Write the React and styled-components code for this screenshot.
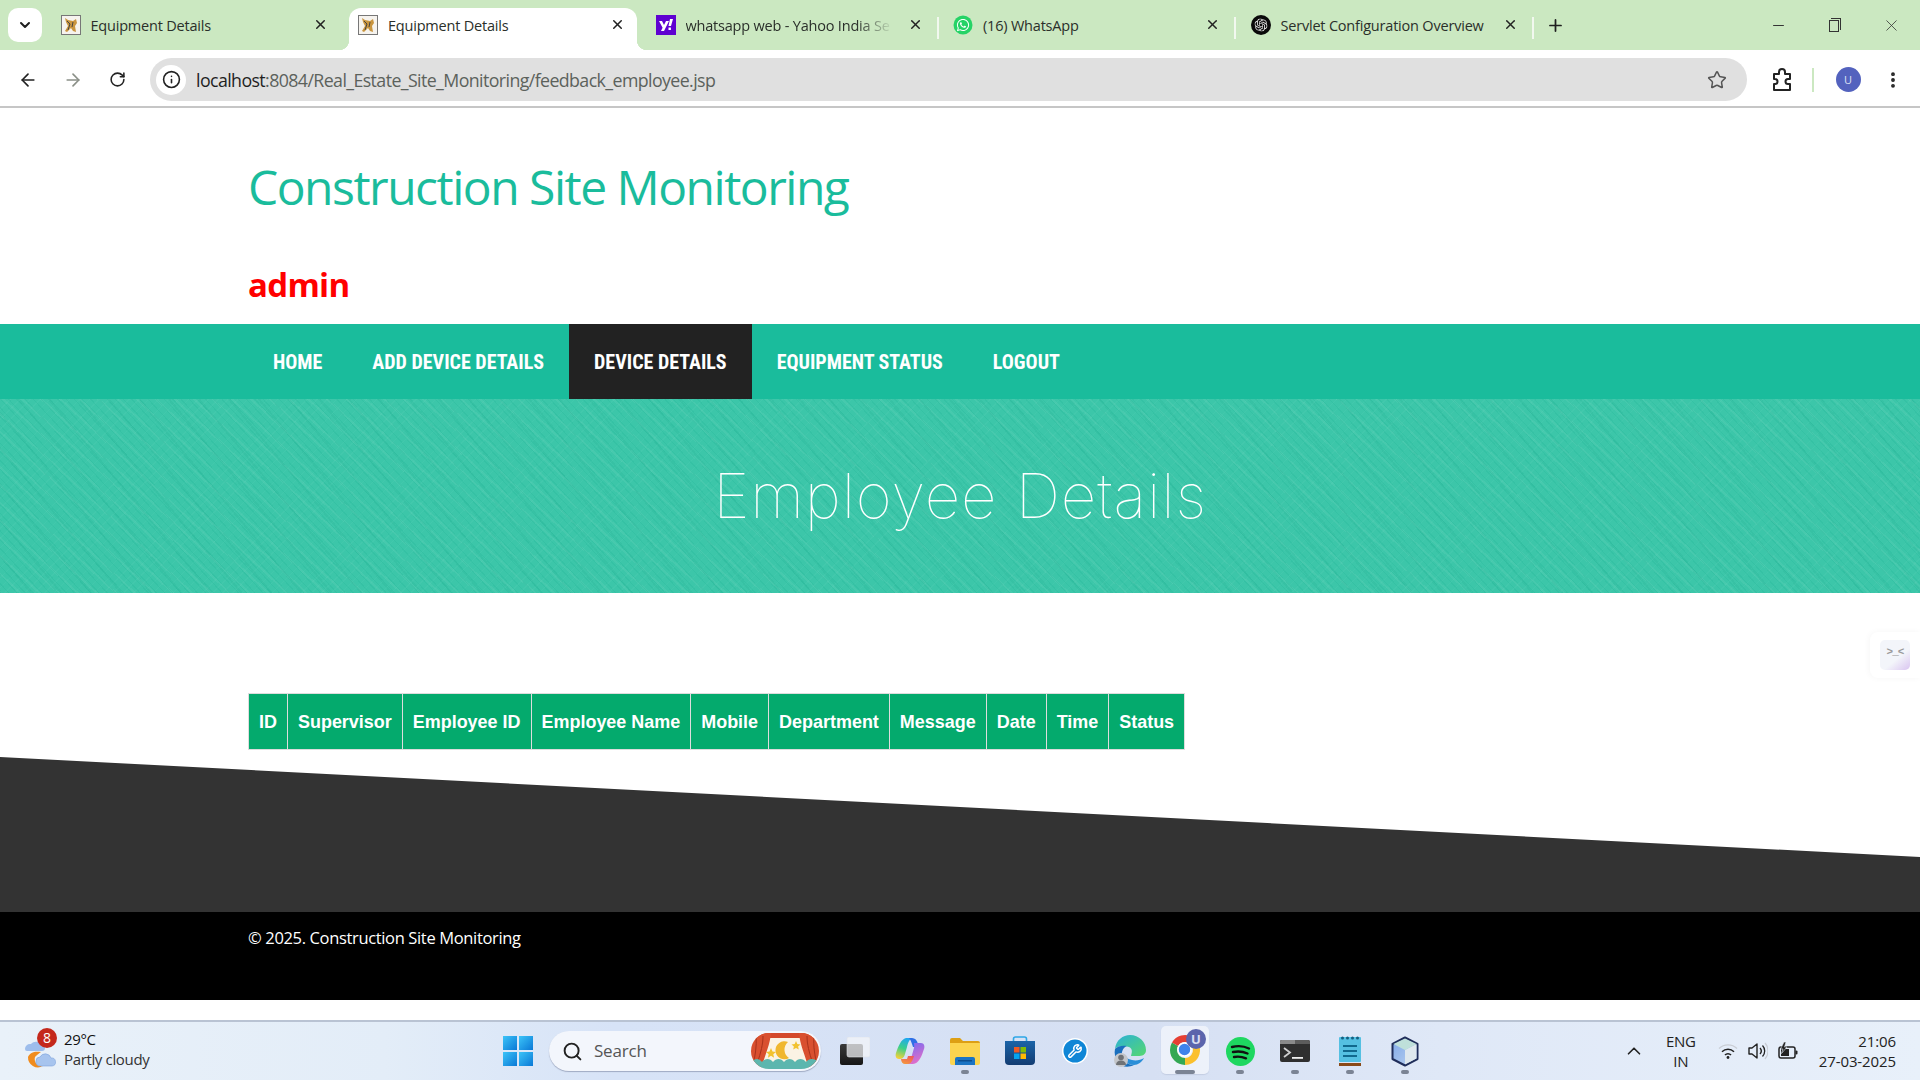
import React from 'react';
import styled, { createGlobalStyle } from 'styled-components';
import { FaWhatsapp } from 'react-icons/fa';
import { SiOpenai } from 'react-icons/si';
import { ArrowLeft, ArrowRight, RotateCw, Info, Star, MoreVertical, X, Plus, Minus, ChevronDown, ChevronUp, Search, Wrench } from 'lucide-react';

const Global = createGlobalStyle`
  html, body { margin: 0; padding: 0; background: #fff; }
  body { font-family: "Open Sans", "Liberation Sans", sans-serif; overflow: hidden; }
  * { box-sizing: border-box; }
`;
const Screen = styled.div`width: 1920px; height: 1080px; display: flex; flex-direction: column; overflow: hidden; background: #fff;`;

const TabStrip = styled.div`height: 50px; background: #cbe8c1; display: flex; align-items: flex-end; flex: none;`;
const Switcher = styled.div`width: 34px; height: 34px; margin: 0 8px 8px 8px; border-radius: 10px; background: #fff; display: flex; align-items: center; justify-content: center; color: #1f1f1f;`;
const Tab = styled.div`
  position: relative; width: 297.5px; height: 42px; flex: none; display: flex; align-items: center; padding: 0 0 8px 10.5px; color: #2a2f2a;
  &::before { content: ''; position: absolute; z-index: 0; left: 1.5px; top: 0; bottom: 0; width: 288px; border-radius: 12px 12px 0 0; background: ${p => (p.$active ? '#fff' : 'transparent')}; }
  &::after { content: ''; position: absolute; right: 4px; top: 9px; height: 22px; width: 2px; background: ${p => (p.$sep ? '#f2f8ef' : 'transparent')}; }
`;
const Corner = styled.span`
  position: absolute; bottom: 0; width: 10px; height: 10px; left: ${p => (p.$right ? '289.5px' : '-8.5px')};
  background: radial-gradient(circle at ${p => (p.$right ? '100% 0' : '0 0')}, transparent 10px, #fff 10.5px);
`;
const FavSlot = styled.span`position: relative; z-index: 1; width: 20px; height: 20px; flex: none; display: flex; align-items: center; justify-content: center;`;
const TabTitle = styled.span`
  position: relative; z-index: 1; margin: 2px 0 0 10px; font: 400 14.5px/20px "Open Sans", sans-serif; letter-spacing: -0.2px; white-space: nowrap;
  ${p => p.$fade && '-webkit-mask-image: linear-gradient(to right, #000 170px, transparent 207px);'}
`;
const TabClose = styled.span`position: absolute; z-index: 1; left: 262px; top: 8px; width: 16px; height: 16px; color: #222; display: flex; align-items: center; justify-content: center;`;
const NewTab = styled.div`width: 24px; height: 34px; margin: 0 0 8px 6px; display: flex; align-items: center; justify-content: center; color: #1f1f1f;`;
const WindowControls = styled.div`margin-left: auto; height: 50px; display: flex; align-self: flex-start;`;
const WinBtn = styled.div`width: ${p => p.$w || 56}px; height: 50px; display: flex; align-items: center; justify-content: center; color: #333;`;
const RestoreIcon = styled.span`
  position: relative; width: 10px; height: 12px; border: 1px solid #333; background: #cbe8c1; margin-top: 2px;
  &::before { content: ''; position: absolute; left: 1px; top: -3px; width: 9px; height: 11px; border: 1px solid #333; border-left: 0; border-bottom: 0; }
`;

const Toolbar = styled.div`height: 58px; flex: none; background: #fff; border-radius: 10px 10px 0 0; border-bottom: 2px solid #c6c6c6; display: flex; align-items: center; padding: 3px 0 0 0; position: relative;`;
const NavBtn = styled.div`width: 44.5px; height: 44px; flex: none; display: flex; align-items: center; justify-content: center; color: ${p => p.$off ? '#8b9088' : '#222'};`;
const BackGroup = styled.div`display: flex; padding-left: 6px; width: 150px;`;
const Omnibox = styled.div`width: 1597px; height: 43px; flex: none; border-radius: 22px; background: #e0e0e0; display: flex; align-items: center; padding: 0 20px 0 6px;`;
const InfoChip = styled.div`width: 30px; height: 30px; border-radius: 50%; background: #fff; display: flex; align-items: center; justify-content: center; color: #222;`;
const Url = styled.div`margin-left: 10px; font: 400 17.8px/24px "Open Sans", sans-serif; letter-spacing: -0.6px; color: #5c625c; white-space: nowrap;`;
const UrlHost = styled.span`color: #1f1f1f;`;
const OmniStar = styled.div`margin-left: auto; color: #555; display: flex;`;
const ToolRight = styled.div`flex: 1; display: flex; align-items: center; padding-left: 24px;`;
const Divider = styled.div`width: 1.5px; height: 24px; background: #cbe8c1; margin: 0 22px 0 19px;`;
const Avatar = styled.div`width: 25px; height: 25px; border-radius: 50%; background: #5362be; color: #dfe3f5; font: 400 11px/25px "Open Sans", sans-serif; text-align: center;`;
const KebabSlot = styled.div`margin-left: 22px; display: flex; color: #222;`;

const Page = styled.div`flex: 1; display: flex; flex-direction: column; min-height: 0;`;
const Header = styled.header`height: 216px; flex: none; padding: 46px 0 0 248px; display: flex; flex-direction: column;`;
const SiteTitle = styled.h1`margin: 0; font: 400 48px/66px "Open Sans", sans-serif; letter-spacing: -1.5px; color: #1abc9c; white-space: nowrap;`;
const UserName = styled.h2`margin: 43px 0 0; font: 700 33px/44px "Open Sans", sans-serif; letter-spacing: -0.7px; color: #ff0000;`;
const NavBar = styled.nav`height: 75px; flex: none; background: #1abc9c; display: flex; padding-left: 248px;`;
const NavItem = styled.a`
  display: flex; align-items: center; padding: 0 25px; color: #fff; text-transform: uppercase;
  font: 700 20px/24px Roboto, sans-serif; font-stretch: 75%; background: ${p => (p.$active ? '#222' : 'transparent')}; white-space: nowrap;
`;
const Banner = styled.section`
  height: 194px; flex: none; display: flex; align-items: center; justify-content: center;
  background-color: #3cc6a9;
  background-image:
    repeating-linear-gradient(47deg, rgba(26,176,146,.2) 0 1px, transparent 1px 6px),
    repeating-linear-gradient(43deg, rgba(255,255,255,.05) 0 2px, transparent 2px 13px),
    repeating-linear-gradient(135deg, rgba(255,255,255,.03) 0 1px, transparent 1px 7px),
    repeating-linear-gradient(50deg, rgba(20,160,130,.12) 0 2px, transparent 2px 23px);
`;
const BannerTitle = styled.h2`margin: 0; font: 100 62px/74px Inter, sans-serif; letter-spacing: 0.85px; color: #fff; white-space: nowrap;`;
const Main = styled.main`height: 164px; flex: none; padding: 100px 0 0 248px;`;
const Table = styled.table`border-collapse: collapse; font-family: "Liberation Sans", Arial, sans-serif;`;
const Th = styled.th`background: #04aa6d; color: #fff; border: 1px solid #ddd; padding: 17.5px 10px; font-size: 17.97px; line-height: 20px; font-weight: 700; white-space: nowrap;`;
const Slant = styled.div`height: 155px; flex: none; background: #333; clip-path: polygon(0 0, 100% 100px, 100% 100%, 0 100%);`;
const Footer = styled.footer`height: 88px; flex: none; background: #000; color: #fff; padding: 13px 0 0 248px; font: 400 16.5px/26px "Open Sans", sans-serif; letter-spacing: -0.35px;`;
const Gap = styled.div`height: 20px; flex: none; background: #fff;`;

const Widget = styled.div`position: absolute; right: 0; top: 632px; width: 50px; height: 46px; background: #fff; border-radius: 8px 0 0 8px; box-shadow: -1px 0 6px rgba(0,0,0,.04); display: flex; align-items: center; justify-content: center;`;
const WidgetInner = styled.div`width: 30px; height: 30px; border-radius: 5px; background: linear-gradient(140deg, #f3f5fa 60%, #d9c4f0); color: #9a9a9a; font: 700 11px/24px "Liberation Mono", monospace; text-align: center; letter-spacing: -1px;`;

const Taskbar = styled.div`
  height: 60px; flex: none; border-top: 2px solid #b9c3d3; display: grid; grid-template-columns: 501px auto 1fr; align-items: center;
  background: linear-gradient(90deg, #e9f1f9 0%, #e3edf8 20%, #d7e3f7 32%, #d6e0f3 60%, #dfe8f7 75%, #e8f0fa 100%);
`;
const Weather = styled.div`display: flex; align-items: center; padding-left: 24px; height: 100%;`;
const WeatherIcon = styled.div`position: relative; width: 34px; height: 36px; flex: none;`;
const Badge = styled.span`position: absolute; left: 13px; top: -5px; width: 20px; height: 20px; border-radius: 50%; background: #c4281c; color: #fff; font: 400 14px/20px "Open Sans", sans-serif; text-align: center;`;
const WeatherText = styled.div`margin: -4px 0 0 6px; font: 400 15px/20px "Open Sans", sans-serif; letter-spacing: -0.35px; color: #333;`;
const WeatherTemp = styled.div`color: #111;`;
const Center = styled.div`display: flex; align-items: center; height: 100%;`;
const WinLogo = styled.div`width: 30px; height: 30px; display: grid; grid-template-columns: 1fr 1fr; gap: 1.5px; margin: 0 16px 0 2px;`;
const WinPane = styled.span`background: linear-gradient(135deg, #3cc4f8, #0a78d6);`;
const SearchBox = styled.div`width: 272px; height: 40px; margin-right: 6.5px; border-radius: 20px; background: #f3f6fc; box-shadow: 0 1px 1px rgba(90,100,130,.45); display: flex; align-items: center; padding: 0 2px 0 13px; color: #222;`;
const SearchText = styled.span`margin-left: 11px; font: 400 17px/22px "Open Sans", sans-serif; letter-spacing: -0.2px; color: #555;`;
const SearchArt = styled.div`margin-left: auto; display: flex;`;
const Slot = styled.div`
  position: relative; width: 55px; height: 58px; flex: none; display: flex; align-items: center; justify-content: center;
  ${p => p.$active && `&::before { content: ''; position: absolute; left: 3.5px; top: 4px; width: 48px; height: 48px; border-radius: 5px; background: rgba(255,255,255,.55); box-shadow: 0 1px 1px rgba(120,130,160,.2); }`}
  & > svg { position: relative; }
`;
const Dot = styled.span`position: absolute; left: 50%; bottom: 6px; height: 4px; border-radius: 2px; transform: translateX(-50%); background: #7b8494; width: ${p => (p.$wide ? '20px' : '8px')};`;
const Tray = styled.div`display: flex; align-items: center; justify-content: flex-end; padding-right: 24px; color: #222; height: 100%;`;
const TrayChevron = styled.div`display: flex; margin-right: 11px;`;
const Lang = styled.div`width: 50px; text-align: center; font: 400 15px/20px "Open Sans", sans-serif; letter-spacing: -0.3px; margin-right: 12px;`;
const TrayIcons = styled.div`display: flex; align-items: center; gap: 10px; margin-right: 21px;`;
const Clock = styled.div`text-align: right; font: 400 15px/20px "Open Sans", sans-serif; letter-spacing: -0.1px;`;

const TomcatIcon = () => (
  <svg width="20" height="20" viewBox="0 0 20 20"><rect x=".5" y=".5" width="19" height="19" fill="#f6f3ee" stroke="#777" /><path d="M4 3l3 2 5 1 3-2 1 4-2 3 1 6-3-1-2-3-4 4-2-1 3-5-2-4z" fill="#c9953f" /><path d="M6 6l3 3-2 6M12 7l-1 5" stroke="#444" strokeWidth="1" fill="none" /></svg>
);
const YahooIcon = () => (
  <svg width="20" height="20" viewBox="0 0 20 20"><rect width="20" height="20" fill="#5f01d1" /><path d="M3 6h3l2 4 2-4h3l-5 10H5l1.6-3.2zM14 4h3l-2 7h-2.5zM12.5 12.5h2.4v2.4h-2.4z" fill="#fff" /></svg>
);
const WhatsAppIcon = () => (
  <svg width="20" height="20" viewBox="0 0 20 20"><circle cx="10" cy="10" r="9.5" fill="#25d366" /><FaWhatsapp x="3" y="3" size="14" color="#fff" /></svg>
);
const OpenAiIcon = () => (
  <svg width="20" height="20" viewBox="0 0 20 20"><circle cx="10" cy="10" r="10" fill="#0a0a0a" /><SiOpenai x="3.5" y="3.5" size="13" color="#e8e8e8" /></svg>
);
const PuzzleSvg = () => (
  <svg width="22" height="24" viewBox="0 0 22 24"><path d="M3 6h5V4a3 3 0 0 1 6 0v2h5v5h-2a2.500 2.500 0 0 0 0 5h2v6H3v-6h1a2.500 2.500 0 0 0 0-5H3z" fill="none" stroke="#222" strokeWidth="2" strokeLinejoin="round" /></svg>
);
const tabs = [
  { title: 'Equipment Details', icon: <TomcatIcon /> },
  { title: 'Equipment Details', icon: <TomcatIcon />, active: true },
  { title: 'whatsapp web - Yahoo India Se', icon: <YahooIcon />, fade: true, sep: true },
  { title: '(16) WhatsApp', icon: <WhatsAppIcon />, sep: true },
  { title: 'Servlet Configuration Overview', icon: <OpenAiIcon />, sep: true },
];
const menu = ['Home', 'Add Device Details', 'Device Details', 'Equipment Status', 'Logout'];
const columns = ['ID', 'Supervisor', 'Employee ID', 'Employee Name', 'Mobile', 'Department', 'Message', 'Date', 'Time', 'Status'];

const WeatherSvg = () => (
  <svg width="34" height="36" viewBox="0 0 34 36" style={{ position: 'absolute', left: 0, top: 0 }}>
    <path d="M1 16a5 5 0 0 1 5-5h1a6 6 0 0 1 10 1h1a3 3 0 0 1 0 6H3a2 2 0 0 1-2-2z" fill="#9dbdec" />
    <path d="M4 24a10 10 0 0 0 15 9 7 7 0 0 1-8-9c2-2 4-4 6-5-6-1-11 0-13 5z" fill="#f08c1e" />
    <path d="M12 28a4 4 0 0 1 4-4 6 6 0 0 1 11 1 4 4 0 0 1 1 8H16a4 4 0 0 1-4-5z" fill="#a7c4ee" stroke="#7ea3dc" strokeWidth=".6" />
  </svg>
);
const SearchArtSvg = () => (
  <svg width="68" height="36" viewBox="0 0 68 36">
    <defs><clipPath id="pill"><rect width="68" height="36" rx="18" /></clipPath></defs>
    <g clipPath="url(#pill)">
      <rect width="68" height="36" fill="#fbf3e4" />
      <path d="M0 0h68v5H0z" fill="#d4492a" />
      <path d="M0 0h20c-1 12-6 22-10 36H0z" fill="#d9502f" />
      <path d="M68 0H48c1 12 6 22 10 36h10z" fill="#d9502f" />
      <path d="M5 3c1 10-1 20-3 30M12 3c0 8-2 16-6 28M63 3c-1 10 1 20 3 30M56 3c0 8 2 16 6 28" stroke="#a8321b" fill="none" />
      <path d="M37 9a9 9 0 1 0 1 16 10 10 0 0 1-1-16z" fill="#f0b72e" />
      <path d="M20 15l1.500 3.500 3.500.5-2.700 2.200.8 3.500-3.100-2-3.100 2 .8-3.500L15 19l3.500-.5zM45 8l1.300 3 3.200.4-2.400 2 .7 3.200-2.800-1.700-2.800 1.700.7-3.200-2.400-2 3.200-.4z" fill="#f2c230" />
      <path d="M0 29c4-4 8-4 11 0 3-4 8-4 11 0 3-4 8-4 11 0 3-4 8-4 11 0 3-4 8-4 11 0 3-4 8-4 13 0v7H0z" fill="#5cb6ae" />
    </g>
  </svg>
);
const TaskViewSvg = () => (
  <svg width="30" height="28" viewBox="0 0 30 28">
    <defs><linearGradient id="tvd" x1="0" y1="0" x2="0" y2="1"><stop offset="0" stopColor="#3a3a3a" /><stop offset="1" stopColor="#161616" /></linearGradient></defs>
    <rect x="0" y="7" width="23" height="21" rx="2" fill="url(#tvd)" />
    <rect x="7" y="0" width="23" height="20" rx="2" fill="#f4f5f8" fillOpacity=".72" stroke="#e1e4ea" strokeWidth=".6" />
  </svg>
);
const CopilotSvg = () => (
  <svg width="30" height="28" viewBox="0 0 30 28">
    <defs>
      <linearGradient id="cp1" x1=".6" y1="0" x2=".3" y2="1"><stop offset="0" stopColor="#1fa7f2" /><stop offset=".5" stopColor="#3bd08a" /><stop offset="1" stopColor="#f2d13a" /></linearGradient>
      <linearGradient id="cp2" x1=".2" y1="1" x2=".6" y2="0"><stop offset="0" stopColor="#f59a3c" /><stop offset="1" stopColor="#ee5a5a" /></linearGradient>
      <linearGradient id="cp3" x1=".3" y1="0" x2=".7" y2="1"><stop offset="0" stopColor="#7a6cf0" /><stop offset="1" stopColor="#ea6fc6" /></linearGradient>
    </defs>
    <path d="M11 1h7c-4 1-5 5-6 9l-2 7c-1 4-3 5-6 5-3 0-4-3-3-6C3 10 6 2 11 1z" fill="url(#cp1)" />
    <path d="M14 1h3c3 0 5 2 6 6l1 3h-6l-1-3c-1-3-2-5-3-6z" fill="#2e6fe6" />
    <path d="M19 6h7c3 0 4 3 3 6-2 6-5 15-11 15h-7c4-1 5-5 6-9l2-7c.5-2 0-4 0-5z" fill="url(#cp3)" />
    <path d="M6 22h6l1-3h6l-1 3c-1 3-3 5-6 5h-2c-2 0-4-2-4-5z" fill="url(#cp2)" />
  </svg>
);
const FolderSvg = () => (
  <svg width="30" height="28" viewBox="0 0 30 28"><path d="M0 3a2 2 0 0 1 2-2h8l3 3h15a2 2 0 0 1 2 2v3H0z" fill="#dd9f14" /><path d="M0 6h30v20a2 2 0 0 1-2 2H2a2 2 0 0 1-2-2z" fill="#fcd44f" /><path d="M5 28v-6a2 2 0 0 1 2-2h16a2 2 0 0 1 2 2v6z" fill="#1b74c4" /><rect x="8" y="23" width="14" height="1.500" fill="#0c4e90" /></svg>
);
const StoreSvg = () => (
  <svg width="30" height="30" viewBox="0 0 30 30">
    <defs><linearGradient id="st" x1="0" y1="0" x2="0" y2="1"><stop offset="0" stopColor="#1b64a8" /><stop offset="1" stopColor="#133c72" /></linearGradient></defs>
    <path d="M8.500 6V3a2 2 0 0 1 2-2h9a2 2 0 0 1 2 2v3" fill="none" stroke="#2ea6e6" strokeWidth="1.600" />
    <path d="M0 5h30v20a4 4 0 0 1-4 4H4a4 4 0 0 1-4-4z" fill="url(#st)" />
    <rect x="9" y="11" width="5.500" height="5.500" fill="#ef5a24" /><rect x="15.500" y="11" width="5.500" height="5.500" fill="#81bb05" /><rect x="9" y="17.500" width="5.500" height="5.500" fill="#05a4ef" /><rect x="15.500" y="17.500" width="5.500" height="5.500" fill="#ffb902" />
  </svg>
);
const WrenchSvg = () => (
  <svg width="26" height="26" viewBox="0 0 26 26"><circle cx="13" cy="13" r="13" fill="#fff" /><circle cx="13" cy="13" r="11.500" fill="#0f86d6" /><Wrench x="5.500" y="5.500" size="15" color="#fff" strokeWidth="2.400" /></svg>
);
const EdgeSvg = () => (
  <svg width="32" height="34" viewBox="0 0 32 34">
    <defs><linearGradient id="edge1" x1="0" y1="0" x2="1" y2="1"><stop offset="0" stopColor="#2bb0d8" /><stop offset="1" stopColor="#55d86e" /></linearGradient></defs>
    <path d="M1 15C2 6 9 1 16 1c9 0 16 7 16 15 0 5-4 6-8 6h-7c1-4 2-7-2-9C9 11 3 12 1 15z" fill="url(#edge1)" />
    <path d="M1 15c2-3 8-4 12-3-3 1-6 5-5 10 1 6 7 9 12 9-6 3-13 2-16-3-3-4-4-9-3-13z" fill="#1a6fbe" />
    <path d="M20 31c4 0 8-3 10-7-3 2-8 3-12 2-5-1-8-4-9-6 0 6 4 11 11 11z" fill="#2a8ed8" />
    <circle cx="7" cy="26" r="7" fill="#c4c6ca" /><circle cx="7" cy="23.500" r="2.800" fill="#6f7276" /><path d="M2 31c0-3 2-4.500 5-4.500s5 1.500 5 4.500z" fill="#6f7276" />
  </svg>
);
const ChromeSvg = () => (
  <svg width="44" height="44" viewBox="0 0 44 44">
    <circle cx="22" cy="21" r="11.500" fill="none" stroke="#34a853" strokeWidth="7" pathLength="3" strokeDasharray="1 2" transform="rotate(90 22 21)" />
    <circle cx="22" cy="21" r="11.500" fill="none" stroke="#fbc02d" strokeWidth="7" pathLength="3" strokeDasharray="1 2" transform="rotate(-30 22 21)" />
    <circle cx="22" cy="21" r="11.500" fill="none" stroke="#e53f33" strokeWidth="7" pathLength="3" strokeDasharray="1 2" transform="rotate(210 22 21)" />
    <circle cx="21.500" cy="20.500" r="6.500" fill="#3f83ec" stroke="#fff" strokeWidth="1.500" />
    <circle cx="33" cy="10" r="10" fill="#5b64ac" /><text x="33" y="14.500" textAnchor="middle" fontSize="13" fontWeight="700" fontFamily="Open Sans" fill="#d9ddf2">U</text>
  </svg>
);
const SpotifySvg = () => (
  <svg width="29" height="29" viewBox="0 0 29 29"><circle cx="14.500" cy="14.500" r="14.500" fill="#1ed760" /><path d="M6 10c6-1.500 12-1 17 1.500M7 15c5-1 10-.6 14.500 1.500M8 20c4-.8 8-.4 12 1.300" fill="none" stroke="#111" strokeWidth="2.400" strokeLinecap="round" /></svg>
);
const TerminalSvg = () => (
  <svg width="30" height="22" viewBox="0 0 30 22"><rect width="30" height="22" rx="2" fill="#2f2f2f" /><path d="M0 2a2 2 0 0 1 2-2h26a2 2 0 0 1 2 2v2H0z" fill="#5c5c5c" /><path d="M0 2a2 2 0 0 1 2-2h13v4H0z" fill="#8a8a8a" /><path d="M4 8l6 4.500-6 4.500" fill="none" stroke="#cfcfcf" strokeWidth="1.800" /><rect x="12" y="17" width="11" height="1.800" fill="#efefef" /></svg>
);
const NotepadSvg = () => (
  <svg width="22" height="30" viewBox="0 0 22 30"><rect y="1" width="22" height="25" rx="1" fill="#55c0e2" /><rect y="27" width="22" height="3" fill="#8a4a18" /><circle cx="3.500" cy="2" r="1.500" fill="#145f80" /><circle cx="8.500" cy="2" r="1.500" fill="#145f80" /><circle cx="13.500" cy="2" r="1.500" fill="#145f80" /><circle cx="18.500" cy="2" r="1.500" fill="#145f80" /><path d="M4 10h14M4 15h14M4 20h14" stroke="#11698e" strokeWidth="2" /></svg>
);
const CubeSvg = () => (
  <svg width="30" height="31" viewBox="0 0 30 31">
    <defs><linearGradient id="cb" x1="0" y1="0" x2="1" y2="1"><stop offset="0" stopColor="#7fa8e8" /><stop offset="1" stopColor="#bcd2f0" /></linearGradient></defs>
    <path d="M15 1.500l12.500 6.500v15L15 29.500 2.500 23V8z" fill="url(#cb)" stroke="#1f2d5a" strokeWidth="2" strokeLinejoin="round" />
    <path d="M15 14l11.500-6v14.500L15 28.500z" fill="#dfe8ee" />
    <path d="M3.500 8L15 14l11.500-6L15 2.500z" fill="#bfe0da" />
  </svg>
);
const WifiSvg = () => (
  <svg width="20" height="16" viewBox="0 0 20 16">
    <path d="M1 5.500a13 13 0 0 1 18 0" fill="none" stroke="#c9cdd4" strokeWidth="1.300" />
    <path d="M4 8.800a8.500 8.500 0 0 1 12 0M7 12a4 4 0 0 1 6 0" fill="none" stroke="#222" strokeWidth="1.500" />
    <circle cx="10" cy="14.500" r="1.400" fill="#222" />
  </svg>
);
const VolumeSvg = () => (
  <svg width="20" height="18" viewBox="0 0 20 18">
    <path d="M1 6h3l5-4v14l-5-4H1z" fill="none" stroke="#222" strokeWidth="1.400" strokeLinejoin="round" />
    <path d="M12 6a4.500 4.500 0 0 1 0 6" fill="none" stroke="#222" strokeWidth="1.400" />
    <path d="M14.500 3.500a8 8 0 0 1 0 11" fill="none" stroke="#222" strokeWidth="1.300" />
    <path d="M17 1a12 12 0 0 1 0 16" fill="none" stroke="#c9cdd4" strokeWidth="1.200" />
  </svg>
);
const BatterySvg = () => (
  <svg width="20" height="18" viewBox="0 0 20 18">
    <rect x="1" y="5" width="16" height="11" rx="2" fill="none" stroke="#222" strokeWidth="1.500" />
    <rect x="3" y="7" width="8" height="7" fill="#222" />
    <rect x="17.500" y="8.500" width="2" height="4" rx="1" fill="#222" />
    <path d="M6 0L2.500 7H5l-1.500 4.500L9 5H6.500L8 0z" fill="#222" stroke="#e6eef9" strokeWidth=".6" />
  </svg>
);

export default function App() {
  return (
    <Screen>
      <Global />
      <TabStrip>
        <Switcher><ChevronDown size={16} strokeWidth={3} /></Switcher>
        {tabs.map((t, i) => (
          <Tab key={i} $active={t.active} $sep={t.sep}>
            {t.active && <><Corner /><Corner $right /></>}
            <FavSlot>{t.icon}</FavSlot>
            <TabTitle $fade={t.fade}>{t.title}</TabTitle>
            <TabClose><X size={15} strokeWidth={2.4} /></TabClose>
          </Tab>
        ))}
        <NewTab><Plus size={19} strokeWidth={2.2} /></NewTab>
        <WindowControls>
          <WinBtn><Minus size={17} strokeWidth={1.4} /></WinBtn>
          <WinBtn><RestoreIcon /></WinBtn>
          <WinBtn $w={58}><X size={19} strokeWidth={1} /></WinBtn>
        </WindowControls>
      </TabStrip>
      <Toolbar>
        <BackGroup>
          <NavBtn><ArrowLeft size={20} strokeWidth={2} /></NavBtn>
          <NavBtn $off><ArrowRight size={20} strokeWidth={2} /></NavBtn>
          <NavBtn><RotateCw size={17} strokeWidth={2.2} /></NavBtn>
        </BackGroup>
        <Omnibox>
          <InfoChip><Info size={19} strokeWidth={2} /></InfoChip>
          <Url><UrlHost>localhost</UrlHost>:8084/Real_Estate_Site_Monitoring/feedback_employee.jsp</Url>
          <OmniStar><Star size={20} strokeWidth={1.8} /></OmniStar>
        </Omnibox>
        <ToolRight>
          <PuzzleSvg />
          <Divider />
          <Avatar>U</Avatar>
          <KebabSlot><MoreVertical size={20} strokeWidth={2.6} /></KebabSlot>
        </ToolRight>
      </Toolbar>
      <Page>
        <Header>
          <SiteTitle>Construction Site Monitoring</SiteTitle>
          <UserName>admin</UserName>
        </Header>
        <NavBar>
          {menu.map((m, i) => <NavItem key={m} $active={i === 2}>{m}</NavItem>)}
        </NavBar>
        <Banner><BannerTitle>Employee Details</BannerTitle></Banner>
        <Main>
          <Table><thead><tr>{columns.map(c => <Th key={c}>{c}</Th>)}</tr></thead></Table>
        </Main>
        <Slant />
        <Footer>© 2025. Construction Site Monitoring</Footer>
        <Gap />
      </Page>
      <Widget><WidgetInner>&gt;_&lt;</WidgetInner></Widget>
      <Taskbar>
        <Weather>
          <WeatherIcon><WeatherSvg /><Badge>8</Badge></WeatherIcon>
          <WeatherText><WeatherTemp>29°C</WeatherTemp>Partly cloudy</WeatherText>
        </Weather>
        <Center>
          <WinLogo><WinPane /><WinPane /><WinPane /><WinPane /></WinLogo>
          <SearchBox>
            <Search size={21} strokeWidth={2.2} />
            <SearchText>Search</SearchText>
            <SearchArt><SearchArtSvg /></SearchArt>
          </SearchBox>
          <Slot><TaskViewSvg /></Slot>
          <Slot><CopilotSvg /></Slot>
          <Slot><FolderSvg /><Dot /></Slot>
          <Slot><StoreSvg /></Slot>
          <Slot><WrenchSvg /></Slot>
          <Slot><EdgeSvg /></Slot>
          <Slot $active><ChromeSvg /><Dot $wide /></Slot>
          <Slot><SpotifySvg /><Dot /></Slot>
          <Slot><TerminalSvg /><Dot /></Slot>
          <Slot><NotepadSvg /><Dot /></Slot>
          <Slot><CubeSvg /><Dot /></Slot>
        </Center>
        <Tray>
          <TrayChevron><ChevronUp size={22} strokeWidth={1.8} /></TrayChevron>
          <Lang>ENG<br />IN</Lang>
          <TrayIcons><WifiSvg /><VolumeSvg /><BatterySvg /></TrayIcons>
          <Clock>21:06<br />27-03-2025</Clock>
        </Tray>
      </Taskbar>
    </Screen>
  );
}
